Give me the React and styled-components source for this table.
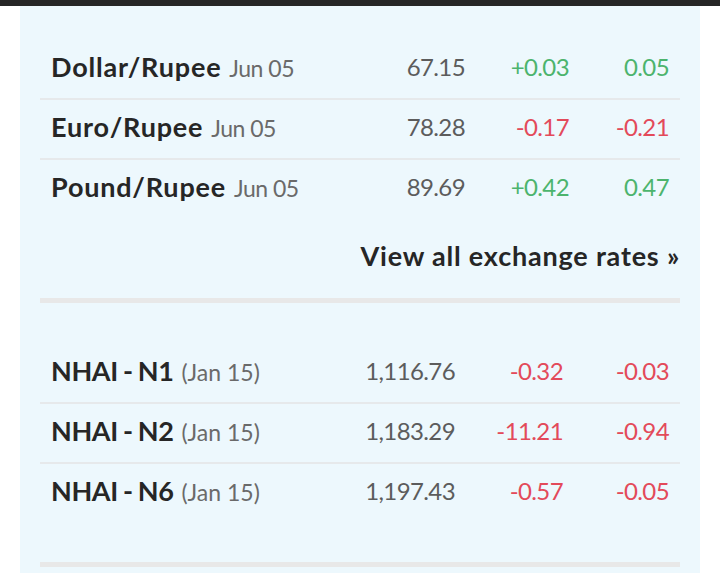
import styled, { createGlobalStyle } from 'styled-components';

const GlobalStyle = createGlobalStyle`
  html, body {
    margin: 0;
    padding: 0;
    background: #ffffff;
  }
  body {
    font-family: Lato, 'Noto Sans', sans-serif;
  }
`;

const TopBar = styled.div`
  height: 6px;
  background: #262626;
`;

const Panel = styled.div`
  margin: 0 20px;
  padding: 0 20px;
  background: #edf8fd;
  min-height: 567px;
  box-sizing: border-box;
`;

const Section = styled.section`
  padding-top: ${(props) => props.top}px;
  border-bottom: 5px solid #e8e8e8;
`;

const Row = styled.div`
  display: grid;
  grid-template-columns: 1fr auto ${(props) => props.cols};
  align-items: center;
  height: 58px;
  padding: 0 11px 6px;
  box-sizing: border-box;

  & + & {
    height: 60px;
    border-top: 2px solid #e6e9eb;
  }
`;

const Name = styled.div`
  display: flex;
  align-items: baseline;
  gap: 8px;
  white-space: nowrap;
`;

const Title = styled.span`
  font-size: 27px;
  font-weight: 700;
  letter-spacing: ${(props) => (props.tight ? '-0.4px' : '0.8px')};
  word-spacing: ${(props) => (props.tight ? '-1px' : '0')};
  color: #262626;
`;

const Stamp = styled.span`
  font-size: 23px;
  font-weight: 400;
  letter-spacing: ${(props) => (props.tight ? '0' : '-0.5px')};
  color: #6a6a6a;
`;

const Value = styled.div`
  font-size: 24px;
  letter-spacing: -0.6px;
  text-align: right;
  color: ${(props) =>
    props.tone === 'up' ? '#4cb46d' : props.tone === 'down' ? '#e34a5a' : '#5c5c5c'};
`;

const MoreLink = styled.a`
  display: block;
  text-align: right;
  font-size: 27px;
  font-weight: 700;
  letter-spacing: 0.8px;
  line-height: 36px;
  color: #262626;
  text-decoration: none;
  padding: 20px 0 24px;
`;

const Gap = styled.div`
  height: ${(props) => props.size}px;
`;

const currencies = [
  { name: 'Dollar/Rupee', date: 'Jun 05', value: '67.15', change: '+0.03', pct: '0.05' },
  { name: 'Euro/Rupee', date: 'Jun 05', value: '78.28', change: '-0.17', pct: '-0.21' },
  { name: 'Pound/Rupee', date: 'Jun 05', value: '89.69', change: '+0.42', pct: '0.47' },
];

const bonds = [
  { name: 'NHAI - N1', date: '(Jan 15)', value: '1,116.76', change: '-0.32', pct: '-0.03' },
  { name: 'NHAI - N2', date: '(Jan 15)', value: '1,183.29', change: '-11.21', pct: '-0.94' },
  { name: 'NHAI - N6', date: '(Jan 15)', value: '1,197.43', change: '-0.57', pct: '-0.05' },
];

const toneOf = (v) => (v.startsWith('-') ? 'down' : 'up');

function QuoteRow({ item, cols, tight }) {
  return (
    <Row cols={cols}>
      <Name>
        <Title tight={tight}>{item.name}</Title>
        <Stamp tight={tight}>{item.date}</Stamp>
      </Name>
      <Value>{item.value}</Value>
      <Value tone={toneOf(item.change)}>{item.change}</Value>
      <Value tone={toneOf(item.pct)}>{item.pct}</Value>
    </Row>
  );
}

export default function App() {
  return (
    <>
      <GlobalStyle />
      <TopBar />
      <Panel>
        <Section top={34}>
          {currencies.map((item) => (
            <QuoteRow key={item.name} item={item} cols="104px 100px" />
          ))}
          <MoreLink href="#">View all exchange rates »</MoreLink>
        </Section>
        <Section top={41}>
          {bonds.map((item) => (
            <QuoteRow key={item.name} item={item} cols="108px 106px" tight />
          ))}
          <Gap size={40} />
        </Section>
      </Panel>
    </>
  );
}
